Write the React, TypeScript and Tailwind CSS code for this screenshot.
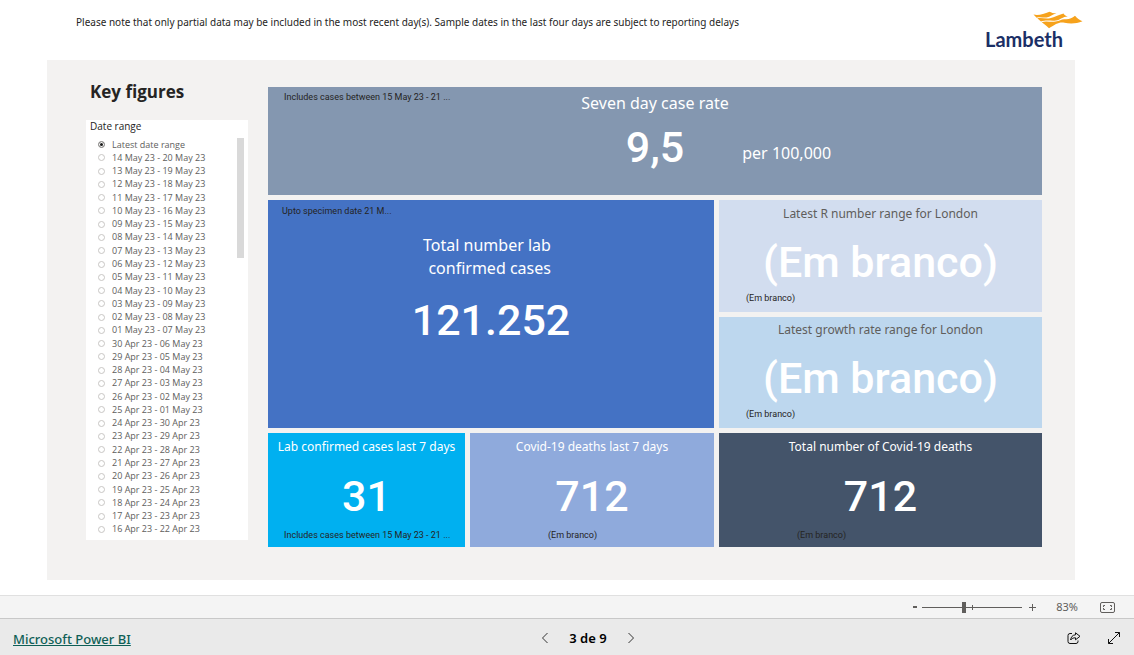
import React from "react";

const ranges = [
  "Latest date range",
  "14 May 23 - 20 May 23",
  "13 May 23 - 19 May 23",
  "12 May 23 - 18 May 23",
  "11 May 23 - 17 May 23",
  "10 May 23 - 16 May 23",
  "09 May 23 - 15 May 23",
  "08 May 23 - 14 May 23",
  "07 May 23 - 13 May 23",
  "06 May 23 - 12 May 23",
  "05 May 23 - 11 May 23",
  "04 May 23 - 10 May 23",
  "03 May 23 - 09 May 23",
  "02 May 23 - 08 May 23",
  "01 May 23 - 07 May 23",
  "30 Apr 23 - 06 May 23",
  "29 Apr 23 - 05 May 23",
  "28 Apr 23 - 04 May 23",
  "27 Apr 23 - 03 May 23",
  "26 Apr 23 - 02 May 23",
  "25 Apr 23 - 01 May 23",
  "24 Apr 23 - 30 Apr 23",
  "23 Apr 23 - 29 Apr 23",
  "22 Apr 23 - 28 Apr 23",
  "21 Apr 23 - 27 Apr 23",
  "20 Apr 23 - 26 Apr 23",
  "19 Apr 23 - 25 Apr 23",
  "18 Apr 23 - 24 Apr 23",
  "17 Apr 23 - 23 Apr 23",
  "16 Apr 23 - 22 Apr 23",
];

function Figure({ children }: { children: React.ReactNode }) {
  return (
    <p className="whitespace-nowrap font-['Roboto',sans-serif] text-[43px] leading-[48px] font-medium text-white">
      {children}
    </p>
  );
}

function Note({ className, children }: { className: string; children: React.ReactNode }) {
  return (
    <p className={`whitespace-nowrap font-['Roboto',sans-serif] text-[9px] leading-3 text-[#252423] ${className}`}>
      {children}
    </p>
  );
}

function Logo() {
  return (
    <div className="flex flex-col text-[#1b2f66]">
      <svg className="ml-12 h-[18px] w-[51px]" viewBox="0 0 51 18" fill="#f6a21c" aria-hidden="true">
        <path d="M.5 3.600C6 4.600 10.500 3.100 16.500 .8C18.200 1.600 20.500 2.500 23.500 2.500C19.500 3.200 17.500 5.900 13.500 6.400C9.500 6.800 7 5.500 3.600 6.700Z" />
        <path d="M4.300 7.300C9 6.300 12.500 8.300 17 7.300C22 6 25 4.300 30.500 2.600C31.300 4 32.500 4.900 34.800 5.500C29.500 5.700 27.500 8.800 23 9.600C18 10.400 13.500 8.500 8 10.600Z" />
        <path d="M8.700 11.200C13.500 9.700 17.500 11.500 22.500 10.600C27 9.700 28.500 7.800 32 8.200C36 8.600 39 7.200 42 4.800C44 7.100 46.500 9 49.500 10.300C43.500 12.900 37 13 31.500 11.800C26 10.700 22.500 13.300 16 17.200C14 15.400 11.500 13.200 8.700 11.200Z" />
      </svg>
      <span className="font-['Lato',sans-serif] text-[20px] leading-5 font-bold">Lambeth</span>
    </div>
  );
}

export default function App() {
  return (
    <div className="flex min-h-screen flex-col bg-white font-['Noto_Sans',sans-serif] text-[#252423]">
      <header className="flex h-[60px] items-start justify-between pr-[50px] pl-[76px]">
        <p className="pt-[14px] text-[10px] leading-4">
          Please note that only partial data may be included in the most recent day(s). Sample dates in the last four
          days are subject to reporting delays
        </p>
        <div className="pt-[11px]">
          <Logo />
        </div>
      </header>

      <main className="mr-[59px] ml-[47px] flex gap-5 bg-[#f3f2f1] pt-[27px] pr-[33px] pb-[33px] pl-[39px]">
        <aside className="-mt-[7px] w-[162px] shrink-0">
          <h1 className="h-10 pl-1 font-['Open_Sans',sans-serif] text-[17px] leading-6 font-bold whitespace-nowrap">
            Key figures
          </h1>
          <fieldset className="flex h-[420px] flex-col bg-white pb-1 font-['Open_Sans',sans-serif]">
            <legend className="float-left h-[18px] pl-1 text-[10px] leading-3">Date range</legend>
            <div className="flex justify-between pr-1">
              <div className="flex h-[398px] flex-col pl-3">
                {ranges.map((range, i) => (
                  <label key={range} className="flex flex-1 items-center gap-[7px] text-[9px] leading-3 text-[#605e5c]">
                    <input
                      type="radio"
                      name="range"
                      defaultChecked={i === 0}
                      className="size-[7px] appearance-none rounded-full border border-[#c8c6c4] bg-white checked:border-[#a19f9d] checked:bg-[#1a1a1a] checked:shadow-[inset_0_0_0_1px_#ffffff]"
                    />
                    <span className="whitespace-nowrap">{range}</span>
                  </label>
                ))}
              </div>
              <div className="h-[120px] w-[7px] bg-[#d9d9d9]" />
            </div>
          </fieldset>
        </aside>

        <div className="grid flex-1 grid-cols-[197fr_244fr_323fr] grid-rows-[108px_112px_111px_114px] gap-[5px] text-white">
          <section className="relative col-span-3 flex flex-col items-center bg-[#8497b0] pt-1">
            <Note className="absolute top-1 left-4">Includes cases between 15 May 23 - 21 ...</Note>
            <h2 className="text-[16px] leading-6">Seven day case rate</h2>
            <div className="mt-2 grid w-full grid-cols-[1fr_auto_1fr] items-center">
              <span />
              <Figure>9,5</Figure>
              <p className="pt-3 pl-[58px] text-[16px] leading-6">per 100,000</p>
            </div>
          </section>

          <section className="relative col-span-2 row-span-2 flex flex-col items-center bg-[#4472c4] pt-[34px]">
            <Note className="absolute top-[5px] left-[14px]">Upto specimen date 21 M...</Note>
            <h2 className="mr-2 text-right text-[16px] leading-[23px]">
              Total number lab
              <br />
              confirmed cases
            </h2>
            <div className="mt-4">
              <Figure>121.252</Figure>
            </div>
          </section>

          <section className="flex flex-col items-center bg-[#d2ddef] pt-1">
            <h2 className="text-[12px] leading-5 text-[#605e5c]">Latest R number range for London</h2>
            <div className="mt-[14px]">
              <Figure>(Em branco)</Figure>
            </div>
            <Note className="mt-[6px] self-start pl-[27px]">(Em branco)</Note>
          </section>

          <section className="flex flex-col items-center bg-[#bdd7ee] pt-[3px]">
            <h2 className="text-[12px] leading-5 text-[#605e5c]">Latest growth rate range for London</h2>
            <div className="mt-[14px]">
              <Figure>(Em branco)</Figure>
            </div>
            <Note className="mt-[6px] self-start pl-[27px]">(Em branco)</Note>
          </section>

          <section className="flex flex-col items-center bg-[#00b0f0] pt-1">
            <h2 className="text-[12px] leading-5 whitespace-nowrap">Lab confirmed cases last 7 days</h2>
            <div className="mt-[15px]">
              <Figure>31</Figure>
            </div>
            <Note className="mt-[9px] self-start pl-4">Includes cases between 15 May 23 - 21 ...</Note>
          </section>

          <section className="flex flex-col items-center bg-[#8faadc] pt-1">
            <h2 className="text-[12px] leading-5">Covid-19 deaths last 7 days</h2>
            <div className="mt-[15px]">
              <Figure>712</Figure>
            </div>
            <Note className="mt-[9px] self-start pl-[78px]">(Em branco)</Note>
          </section>

          <section className="flex flex-col items-center bg-[#44546a] pt-1">
            <h2 className="text-[12px] leading-5">Total number of Covid-19 deaths</h2>
            <div className="mt-[15px]">
              <Figure>712</Figure>
            </div>
            <Note className="mt-[9px] self-start pl-[78px]">(Em branco)</Note>
          </section>
        </div>
      </main>

      <div className="mt-auto flex h-6 items-center justify-end border-t border-b border-t-[#e0e0e0] border-b-[#c8c8c8] bg-[#f4f4f4] pr-[19px] text-[#605e5c]">
        <button aria-label="Zoom out" className="mr-[2px] flex size-[10px] items-center justify-center">
          <span className="h-[2px] w-1 bg-[#605e5c]" />
        </button>
        <div className="relative flex w-[100px] items-center">
          <span className="absolute left-[50px] h-[5px] w-px bg-[#605e5c]" />
          <input
            type="range"
            aria-label="Zoom"
            min={0}
            max={100}
            defaultValue={41}
            className="relative h-3 w-full appearance-none bg-transparent [&::-webkit-slider-runnable-track]:h-px [&::-webkit-slider-runnable-track]:bg-[#605e5c] [&::-webkit-slider-thumb]:-mt-[5px] [&::-webkit-slider-thumb]:h-[11px] [&::-webkit-slider-thumb]:w-1 [&::-webkit-slider-thumb]:appearance-none [&::-webkit-slider-thumb]:bg-[#605e5c]"
          />
        </div>
        <button aria-label="Zoom in" className="ml-[7px]">
          <svg className="size-[7px]" viewBox="0 0 7 7" stroke="#605e5c" fill="none">
            <path d="M3.500 0V7M0 3.500H7" />
          </svg>
        </button>
        <span className="ml-5 text-[11px] leading-4">83%</span>
        <button aria-label="Fit to page" className="ml-[22px]">
          <svg className="h-[11px] w-[15px]" viewBox="0 0 15 11" stroke="#605e5c" fill="none">
            <rect x=".5" y=".5" width="14" height="10" rx="1.500" />
            <path d="M3.500 5V3.500H5M10 3.500H11.500V5M11.500 6V7.500H10M5 7.500H3.500V6" />
          </svg>
        </button>
      </div>

      <footer className="grid h-9 grid-cols-[1fr_auto_1fr] items-center bg-[#eaeaea] px-[13px]">
        <a href="#" className="justify-self-start pt-1 text-[13px] leading-5 font-medium text-[#0f5f56] underline">
          Microsoft Power BI
        </a>
        <nav className="ml-[42px] flex items-center gap-5 pt-[2px] text-[13px] leading-5 font-semibold text-black">
          <button aria-label="Previous page">
            <svg className="h-3 w-2" viewBox="0 0 8 12" stroke="#333" fill="none">
              <path d="M6.500 1L1.500 6L6.500 11" />
            </svg>
          </button>
          <span>3 de 9</span>
          <button aria-label="Next page">
            <svg className="h-3 w-2" viewBox="0 0 8 12" stroke="#333" fill="none">
              <path d="M1.500 1L6.500 6L1.500 11" />
            </svg>
          </button>
        </nav>
        <div className="flex items-center gap-[26px] justify-self-end pt-[2px]">
          <button aria-label="Share">
            <svg className="h-3 w-[14px]" viewBox="0 0 14 12" stroke="#111" fill="none" strokeLinejoin="round">
              <path d="M5 1.500H3A2 2 0 0 0 1 3.500V9.500A2 2 0 0 0 3 11.500H9A2 2 0 0 0 11 9.500V8.500" />
              <path d="M8.500 .8L13 4.300L8.500 7.800V5.800C6.500 5.700 5 6.300 3.600 8C4 5 5.500 3 8.500 2.800Z" />
            </svg>
          </button>
          <button aria-label="Full screen">
            <svg className="size-[14px]" viewBox="0 0 14 14" stroke="#111" fill="none">
              <path d="M1.500 12.500L12.500 1.500M8 1.500H12.500V6M1.500 8V12.500H6" />
            </svg>
          </button>
        </div>
      </footer>
    </div>
  );
}
